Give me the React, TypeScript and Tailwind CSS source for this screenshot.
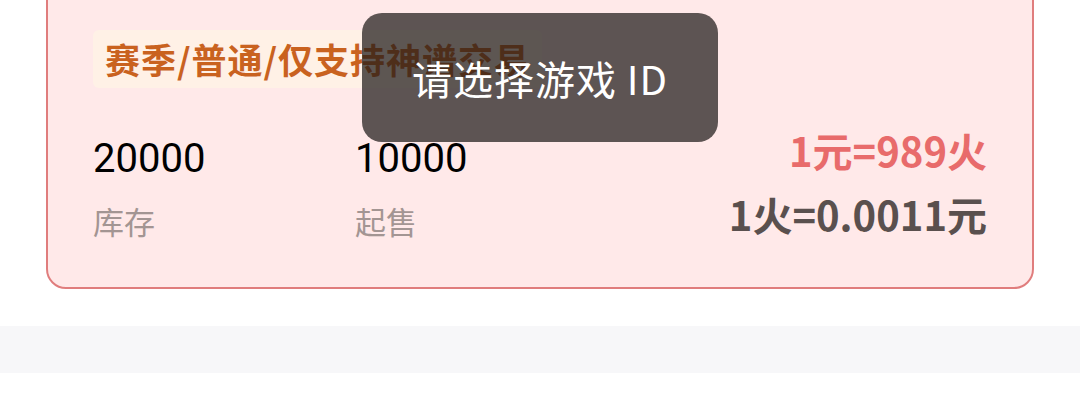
import React from 'react'

const cjk = { fontFamily: 'Roboto, "Noto Sans CJK SC", sans-serif' }
const noto = { fontFamily: '"Noto Sans CJK SC", "Noto Sans", sans-serif' }

function Stat({ value, label }: { value: string; label: string }) {
  return (
    <div className="w-[262px]">
      <div className="text-[40px] leading-[48px] text-black" style={cjk}>{value}</div>
      <div className="mt-[18px] text-[31px] leading-[40px] text-[#a39593]" style={noto}>{label}</div>
    </div>
  )
}

export default function App() {
  return (
    <div className="relative h-[400px] w-[1080px] overflow-hidden bg-white">
      {/* listing card, top edge scrolled off */}
      <div className="mx-[46px] -mt-[40px] h-[329px] rounded-[20px] border-2 border-[#e07d7d] bg-[#ffe9e9] px-[45px] pt-[68px]">
        <div className="inline-block rounded-[6px] bg-[#fff1e6] px-[12px]">
          <span className="text-[35px] font-bold leading-[58px] tracking-[1px] text-[#c9621f]" style={noto}>
            赛季/普通/仅支持神谱交易
          </span>
        </div>

        <div className="mt-[47px] flex items-start">
          <Stat value="20000" label="库存" />
          <Stat value="10000" label="起售" />
          <div className="ml-auto -mt-[11px] text-right" style={noto}>
            <div className="text-[40px] font-bold leading-[52px] text-[#e86b6b]">1元=989火</div>
            <div className="mt-[12px] text-[40px] font-bold leading-[52px] text-[#5a504e]">1火=0.0011元</div>
          </div>
        </div>
      </div>

      <div className="mt-[37px] h-[47px] bg-[#f7f7f9]" />

      {/* toast */}
      <div className="absolute left-1/2 top-[13px] flex h-[129px] w-[356px] -translate-x-1/2 items-center justify-center rounded-[20px] bg-[#1e1a19]/[0.72]">
        <span className="text-[40px] leading-none tracking-[1px] text-white" style={noto}>请选择游戏 ID</span>
      </div>
    </div>
  )
}
